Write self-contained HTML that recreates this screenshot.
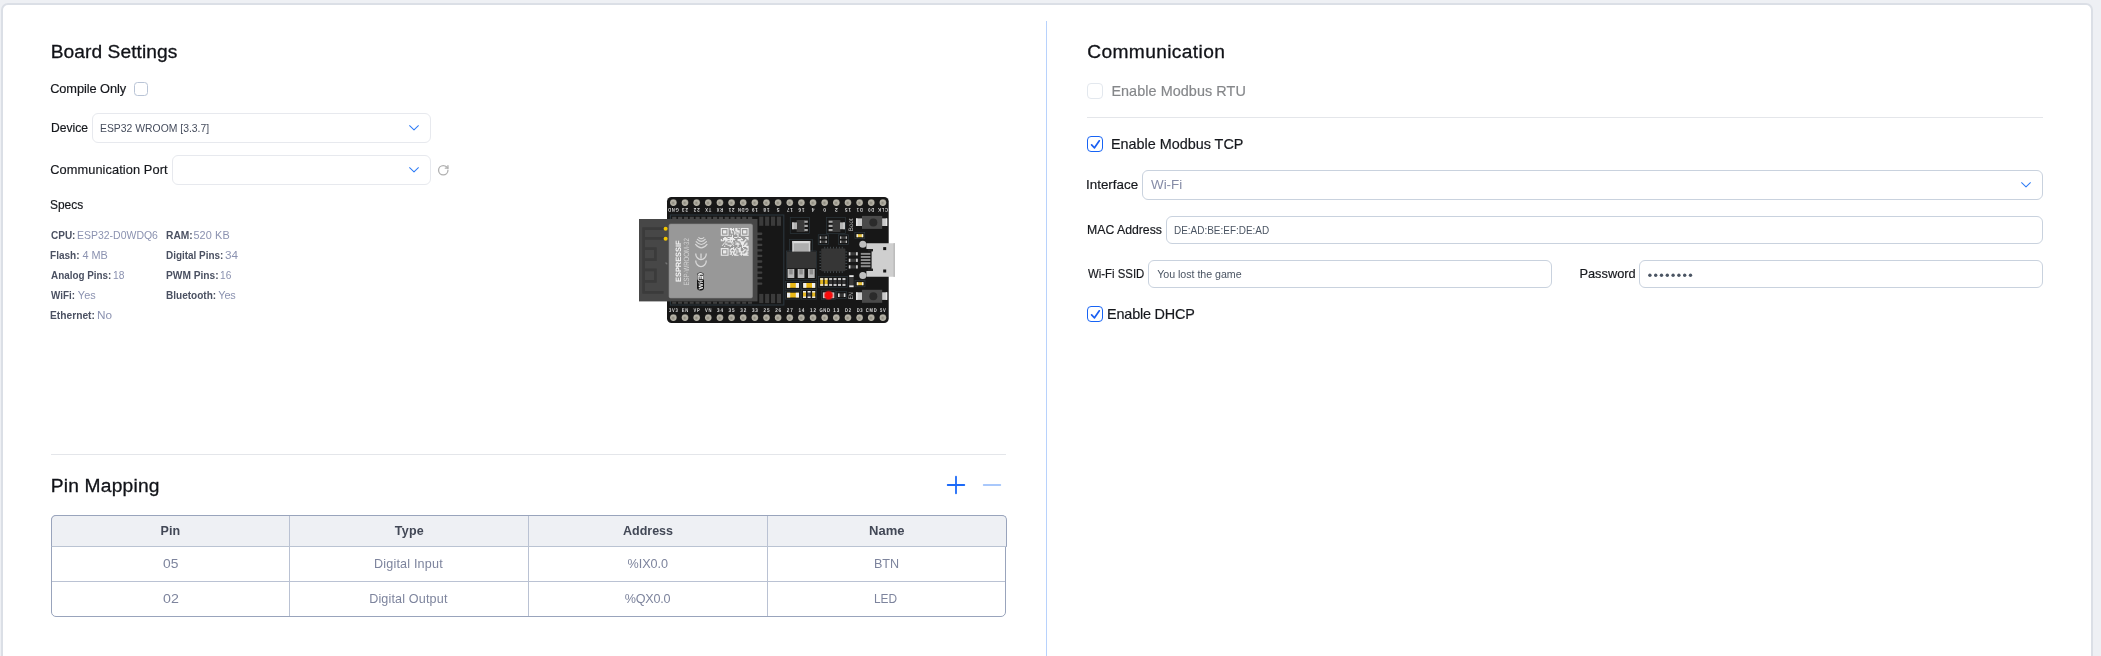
<!DOCTYPE html>
<html><head><meta charset="utf-8"><title>Board Settings</title>
<style>
html,body{margin:0;padding:0}
body{width:2101px;height:656px;overflow:hidden;background:#eef0f4;position:relative;font-family:"Liberation Sans",sans-serif}
.card{position:absolute;left:1px;top:3px;width:2088px;height:700px;border:2px solid #dbdfe6;border-radius:7px;background:#fff}
.t{transform-origin:0 0;position:absolute;line-height:1;white-space:nowrap;font-family:"Liberation Sans",sans-serif}
.a{position:absolute;box-sizing:border-box}
.hr{position:absolute;height:1px;background:#e4e6ea}
.sel{border:1px solid #e7e9ee;border-radius:6px;background:#fff}
.inp{border:1px solid #c9d2de;border-radius:6px;background:#fff}
.cb{border-radius:3.5px;background:#fff}
svg{position:absolute;overflow:visible}
</style></head><body>
<div class="card"></div>
<div class="a" style="left:1046px;top:21px;width:1px;height:640px;background:#b8d2fc"></div>

<!-- left panel -->
<div class="a cb" style="left:134px;top:82px;width:14px;height:14px;border:1px solid #b9c4d6"></div>
<div class="a sel" style="left:92px;top:113px;width:339px;height:30px"></div>
<div class="a sel" style="left:172px;top:155px;width:259px;height:30px"></div>
<svg style="left:407px;top:122px" width="14" height="12" viewBox="0 0 14 12"><path d="M2.6 3.7 L7 7.9 L11.4 3.7" fill="none" stroke="#2f7cf6" stroke-width="1.05" stroke-linecap="round" stroke-linejoin="round"/></svg>
<svg style="left:407px;top:164px" width="14" height="12" viewBox="0 0 14 12"><path d="M2.6 3.7 L7 7.9 L11.4 3.7" fill="none" stroke="#2f7cf6" stroke-width="1.05" stroke-linecap="round" stroke-linejoin="round"/></svg>
<svg style="left:436.56px;top:163.66px" width="12.5" height="12.5" viewBox="0 0 24 24"><path d="M21 12a9 9 0 1 1-9-9c2.52 0 4.93 1 6.74 2.74L21 8" fill="none" stroke="#b0b0b0" stroke-width="2.5" stroke-linecap="round" stroke-linejoin="round"/><path d="M21 3v5h-5" fill="none" stroke="#b0b0b0" stroke-width="2.5" stroke-linecap="round" stroke-linejoin="round"/></svg>

<div class="hr" style="left:51px;top:454px;width:955px"></div>
<svg style="left:945px;top:474px" width="60" height="22" viewBox="0 0 60 22"><path d="M2.7 11 H19.3 M11 2.7 V19.3" stroke="#1c6af8" stroke-width="1.8" stroke-linecap="round" fill="none"/><path d="M38.7 11 H55.3" stroke="#a9c8fb" stroke-width="1.8" stroke-linecap="round" fill="none"/></svg>

<!-- table -->
<div class="a" style="left:51px;top:515px;width:955px;height:102px;border:1px solid #99a4bc;border-radius:5px;background:#fff;overflow:hidden">
 <div class="a" style="left:0;top:65px;width:956px;height:1px;background:#bac2d3"></div>
 <div class="a" style="left:237px;top:0;width:1px;height:102px;background:#bac2d3"></div>
 <div class="a" style="left:476px;top:0;width:1px;height:102px;background:#bac2d3"></div>
 <div class="a" style="left:715px;top:0;width:1px;height:102px;background:#bac2d3"></div>
</div>
<div class="a" style="left:51px;top:515px;width:956px;height:32px;border:1px solid #99a4bc;border-bottom-color:#bac3d2;border-radius:5px 5px 0 0;background:#eef0f4;overflow:hidden">
 <div class="a" style="left:237px;top:0;width:1px;height:32px;background:#bac2d3"></div>
 <div class="a" style="left:476px;top:0;width:1px;height:32px;background:#bac2d3"></div>
 <div class="a" style="left:715px;top:0;width:1px;height:32px;background:#bac2d3"></div>
</div>

<!-- right panel -->
<div class="a cb" style="left:1087px;top:83px;width:16px;height:16px;border:1px solid #e3e8ee;border-radius:4px"></div>
<div class="hr" style="left:1087px;top:117px;width:956px"></div>
<div class="a cb" style="left:1087px;top:136px;width:16px;height:16px;border:1px solid #1764f5;border-radius:4px"></div>
<svg style="left:1087px;top:136px" width="16" height="16" viewBox="0 0 16 16"><path d="M4.6 8.9 L7.5 11.8 L12.3 4.8" fill="none" stroke="#1a5ff2" stroke-width="1.7" stroke-linecap="round" stroke-linejoin="round"/></svg>
<div class="a inp" style="left:1142px;top:170px;width:901px;height:30px;border-radius:6px"></div>
<svg style="left:2019px;top:179px" width="14" height="12" viewBox="0 0 14 12"><path d="M2.6 3.7 L7 7.9 L11.4 3.7" fill="none" stroke="#2f7cf6" stroke-width="1.05" stroke-linecap="round" stroke-linejoin="round"/></svg>
<div class="a inp" style="left:1166px;top:216px;width:877px;height:28px"></div>
<div class="a inp" style="left:1148px;top:260px;width:404px;height:28px"></div>
<div class="a inp" style="left:1639px;top:260px;width:404px;height:28px"></div>
<svg style="left:1646px;top:270px" width="50" height="10" viewBox="0 0 50 10"><g fill="#4b5563"><circle cx="3.9" cy="5.3" r="1.7"/><circle cx="9.7" cy="5.3" r="1.7"/><circle cx="15.5" cy="5.3" r="1.7"/><circle cx="21.3" cy="5.3" r="1.7"/><circle cx="27.1" cy="5.3" r="1.7"/><circle cx="32.9" cy="5.3" r="1.7"/><circle cx="38.7" cy="5.3" r="1.7"/><circle cx="44.5" cy="5.3" r="1.7"/></g></svg>
<div class="a cb" style="left:1087px;top:306px;width:16px;height:16px;border:1px solid #1764f5;border-radius:4px"></div>
<svg style="left:1087px;top:306px" width="16" height="16" viewBox="0 0 16 16"><path d="M4.6 8.9 L7.5 11.8 L12.3 4.8" fill="none" stroke="#1a5ff2" stroke-width="1.7" stroke-linecap="round" stroke-linejoin="round"/></svg>

<div id="tx" style="position:absolute;left:0;top:0;width:2101px;height:656px;will-change:transform">
<span class="t" style="left:50.72px;top:42px;font-size:19.2px;color:#111318;letter-spacing:0.060px;-webkit-text-stroke:0.3px">Board Settings</span>
<span class="t" style="left:50.18px;top:83px;font-size:12.8px;color:#16181d;letter-spacing:-0.078px;-webkit-text-stroke:0.18px">Compile Only</span>
<span class="t" style="left:50.70px;top:122px;font-size:12.8px;color:#16181d;transform:scaleX(0.9483);-webkit-text-stroke:0.18px">Device</span>
<span class="t" style="left:100.11px;top:122px;font-size:11.7px;color:#464d5d;transform:scaleX(0.8892)">ESP32 WROOM [3.3.7]</span>
<span class="t" style="left:50.18px;top:164px;font-size:12.8px;color:#16181d;letter-spacing:0.085px;-webkit-text-stroke:0.18px">Communication Port</span>
<span class="t" style="left:50.02px;top:199px;font-size:12.8px;color:#16181d;transform:scaleX(0.9343);-webkit-text-stroke:0.18px">Specs</span>
<span class="t" style="left:50.72px;top:476px;font-size:19.2px;color:#111318;letter-spacing:0.209px;-webkit-text-stroke:0.3px">Pin Mapping</span>
<span class="t" style="left:1087.20px;top:42px;font-size:19.2px;color:#111318;letter-spacing:0.367px;-webkit-text-stroke:0.3px">Communication</span>
<span class="t" style="left:1111.39px;top:84px;font-size:14.4px;color:#85878a;letter-spacing:0.069px;-webkit-text-stroke:0.18px">Enable Modbus RTU</span>
<span class="t" style="left:1110.89px;top:137px;font-size:14.4px;color:#16181d;letter-spacing:-0.002px;-webkit-text-stroke:0.18px">Enable Modbus TCP</span>
<span class="t" style="left:1086.43px;top:179px;font-size:12.8px;color:#16181d;transform:scaleX(1.0463);-webkit-text-stroke:0.18px">Interface</span>
<span class="t" style="left:1151.26px;top:179px;font-size:12.6px;color:#858ba6;transform:scaleX(1.0631)">Wi-Fi</span>
<span class="t" style="left:1086.89px;top:224px;font-size:12.8px;color:#16181d;transform:scaleX(0.9578);-webkit-text-stroke:0.18px">MAC Address</span>
<span class="t" style="left:1173.53px;top:225px;font-size:10.67px;color:#4b5563;transform:scaleX(0.9348)">DE:AD:BE:EF:DE:AD</span>
<span class="t" style="left:1087.70px;top:268px;font-size:12.8px;color:#16181d;transform:scaleX(0.8902);-webkit-text-stroke:0.18px">Wi-Fi SSID</span>
<span class="t" style="left:1157.16px;top:269px;font-size:10.67px;color:#4b5563;letter-spacing:-0.029px">You lost the game</span>
<span class="t" style="left:1579.44px;top:268px;font-size:12.8px;color:#16181d;letter-spacing:0.013px;-webkit-text-stroke:0.18px">Password</span>
<span class="t" style="left:1107.09px;top:307px;font-size:14.4px;color:#16181d;letter-spacing:-0.183px;-webkit-text-stroke:0.18px">Enable DHCP</span>
<span class="t" style="left:50.81px;top:230px;font-size:10.9px;color:#4b5162;transform:scaleX(0.9187);font-weight:700">CPU:</span>
<span class="t" style="left:77.04px;top:230px;font-size:10.9px;color:#8b92b0;transform:scaleX(0.9622)">ESP32-D0WDQ6</span>
<span class="t" style="left:165.66px;top:230px;font-size:10.9px;color:#4b5162;transform:scaleX(0.9385);font-weight:700">RAM:</span>
<span class="t" style="left:193.43px;top:230px;font-size:10.9px;color:#8b92b0;letter-spacing:0.115px">520 KB</span>
<span class="t" style="left:50.38px;top:250px;font-size:10.9px;color:#4b5162;transform:scaleX(0.9233);font-weight:700">Flash:</span>
<span class="t" style="left:82.41px;top:250px;font-size:10.9px;color:#8b92b0;letter-spacing:-0.023px">4 MB</span>
<span class="t" style="left:165.69px;top:250px;font-size:10.9px;color:#4b5162;transform:scaleX(0.9111);font-weight:700">Digital Pins:</span>
<span class="t" style="left:224.80px;top:250px;font-size:10.9px;color:#8b92b0;transform:scaleX(1.0756)">34</span>
<span class="t" style="left:50.89px;top:270px;font-size:10.9px;color:#4b5162;transform:scaleX(0.9061);font-weight:700">Analog Pins:</span>
<span class="t" style="left:112.82px;top:270px;font-size:10.9px;color:#8b92b0;transform:scaleX(0.9437)">18</span>
<span class="t" style="left:165.66px;top:270px;font-size:10.9px;color:#4b5162;transform:scaleX(0.9352);font-weight:700">PWM Pins:</span>
<span class="t" style="left:219.83px;top:270px;font-size:10.9px;color:#8b92b0;transform:scaleX(0.9344)">16</span>
<span class="t" style="left:51.16px;top:290px;font-size:10.9px;color:#4b5162;transform:scaleX(0.9052);font-weight:700">WiFi:</span>
<span class="t" style="left:77.85px;top:290px;font-size:10.9px;color:#8b92b0;letter-spacing:0.076px">Yes</span>
<span class="t" style="left:165.68px;top:290px;font-size:10.9px;color:#4b5162;transform:scaleX(0.9212);font-weight:700">Bluetooth:</span>
<span class="t" style="left:218.25px;top:290px;font-size:10.9px;color:#8b92b0;letter-spacing:-0.124px">Yes</span>
<span class="t" style="left:50.36px;top:310px;font-size:10.9px;color:#4b5162;transform:scaleX(0.9387);font-weight:700">Ethernet:</span>
<span class="t" style="left:96.92px;top:310px;font-size:10.9px;color:#8b92b0;transform:scaleX(1.0790)">No</span>
<span class="t" style="left:160.50px;top:525px;font-size:12.5px;color:#424856;letter-spacing:0.052px;font-weight:700">Pin</span>
<span class="t" style="left:394.74px;top:525px;font-size:12.5px;color:#424856;letter-spacing:0.259px;font-weight:700">Type</span>
<span class="t" style="left:623.00px;top:525px;font-size:12.5px;color:#424856;letter-spacing:-0.000px;font-weight:700">Address</span>
<span class="t" style="left:868.56px;top:525px;font-size:12.5px;color:#424856;transform:scaleX(1.0418);font-weight:700">Name</span>
<span class="t" style="left:162.53px;top:558px;font-size:12.6px;color:#7d849d;transform:scaleX(1.0962)">05</span>
<span class="t" style="left:374.06px;top:558px;font-size:12.6px;color:#7d849d;letter-spacing:0.176px">Digital Input</span>
<span class="t" style="left:627.59px;top:558px;font-size:12.6px;color:#7d849d;letter-spacing:-0.036px">%IX0.0</span>
<span class="t" style="left:873.96px;top:558px;font-size:12.6px;color:#7d849d;letter-spacing:-0.080px">BTN</span>
<span class="t" style="left:162.51px;top:593px;font-size:12.6px;color:#7d849d;transform:scaleX(1.1299)">02</span>
<span class="t" style="left:369.16px;top:593px;font-size:12.6px;color:#7d849d;letter-spacing:0.151px">Digital Output</span>
<span class="t" style="left:624.79px;top:593px;font-size:12.6px;color:#7d849d;letter-spacing:-0.213px">%QX0.0</span>
<span class="t" style="left:874.42px;top:593px;font-size:12.6px;color:#7d849d;transform:scaleX(0.9435)">LED</span>
</div>
<div style="position:absolute;left:0;top:0;width:2101px;height:656px;will-change:transform">
<svg style="left:630px;top:190px" width="280" height="140" viewBox="630 190 280 140" font-family="Liberation Sans, sans-serif" text-rendering="geometricPrecision">
<defs><radialGradient id="pg" cx="45%" cy="55%" r="55%"><stop offset="0" stop-color="#858278"/><stop offset="0.3" stop-color="#a09d91"/><stop offset="0.7" stop-color="#b8b5a9"/><stop offset="1" stop-color="#97948a"/></radialGradient></defs>
<rect x="667" y="197" width="221.7" height="126" rx="4.5" fill="#171717"/>
<rect x="670.4" y="215" width="113.4" height="90" fill="none" stroke="#2b363c" stroke-width="1.1"/>
<rect x="672.20" y="216.8" width="4.2" height="2.2" fill="#454545"/>
<rect x="672.20" y="301.6" width="4" height="2.2" fill="#3f3f3f"/>
<rect x="678.03" y="216.8" width="4.2" height="2.2" fill="#454545"/>
<rect x="678.03" y="301.6" width="4" height="2.2" fill="#3f3f3f"/>
<rect x="683.86" y="216.8" width="4.2" height="2.2" fill="#454545"/>
<rect x="683.86" y="301.6" width="4" height="2.2" fill="#3f3f3f"/>
<rect x="689.69" y="216.8" width="4.2" height="2.2" fill="#454545"/>
<rect x="689.69" y="301.6" width="4" height="2.2" fill="#3f3f3f"/>
<rect x="695.52" y="216.8" width="4.2" height="2.2" fill="#454545"/>
<rect x="695.52" y="301.6" width="4" height="2.2" fill="#3f3f3f"/>
<rect x="701.35" y="216.8" width="4.2" height="2.2" fill="#454545"/>
<rect x="701.35" y="301.6" width="4" height="2.2" fill="#3f3f3f"/>
<rect x="707.18" y="216.8" width="4.2" height="2.2" fill="#454545"/>
<rect x="707.18" y="301.6" width="4" height="2.2" fill="#3f3f3f"/>
<rect x="713.01" y="216.8" width="4.2" height="2.2" fill="#454545"/>
<rect x="713.01" y="301.6" width="4" height="2.2" fill="#3f3f3f"/>
<rect x="718.84" y="216.8" width="4.2" height="2.2" fill="#454545"/>
<rect x="718.84" y="301.6" width="4" height="2.2" fill="#3f3f3f"/>
<rect x="724.67" y="216.8" width="4.2" height="2.2" fill="#454545"/>
<rect x="724.67" y="301.6" width="4" height="2.2" fill="#3f3f3f"/>
<rect x="730.50" y="216.8" width="4.2" height="2.2" fill="#454545"/>
<rect x="730.50" y="301.6" width="4" height="2.2" fill="#3f3f3f"/>
<rect x="736.33" y="216.8" width="4.2" height="2.2" fill="#454545"/>
<rect x="736.33" y="301.6" width="4" height="2.2" fill="#3f3f3f"/>
<rect x="742.16" y="216.8" width="4.2" height="2.2" fill="#454545"/>
<rect x="742.16" y="301.6" width="4" height="2.2" fill="#3f3f3f"/>
<rect x="747.99" y="216.8" width="4.2" height="2.2" fill="#454545"/>
<rect x="747.99" y="301.6" width="4" height="2.2" fill="#3f3f3f"/>
<rect x="759.20" y="216.6" width="4.1" height="9.2" fill="#3b3b3b"/>
<rect x="759.20" y="293.9" width="4.1" height="9.2" fill="#3b3b3b"/>
<rect x="765.10" y="216.6" width="4.1" height="9.2" fill="#3b3b3b"/>
<rect x="765.10" y="293.9" width="4.1" height="9.2" fill="#3b3b3b"/>
<rect x="771.00" y="216.6" width="4.1" height="9.2" fill="#3b3b3b"/>
<rect x="771.00" y="293.9" width="4.1" height="9.2" fill="#3b3b3b"/>
<rect x="776.90" y="216.6" width="4.1" height="9.2" fill="#3b3b3b"/>
<rect x="776.90" y="293.9" width="4.1" height="9.2" fill="#3b3b3b"/>
<rect x="756" y="232.60" width="6.3" height="2.3" rx="0.8" fill="#404040"/>
<rect x="756" y="238.15" width="6.3" height="2.3" rx="0.8" fill="#404040"/>
<rect x="756" y="243.70" width="6.3" height="2.3" rx="0.8" fill="#404040"/>
<rect x="756" y="249.25" width="6.3" height="2.3" rx="0.8" fill="#404040"/>
<rect x="756" y="254.80" width="6.3" height="2.3" rx="0.8" fill="#404040"/>
<rect x="756" y="260.35" width="6.3" height="2.3" rx="0.8" fill="#404040"/>
<rect x="756" y="265.90" width="6.3" height="2.3" rx="0.8" fill="#404040"/>
<rect x="756" y="271.45" width="6.3" height="2.3" rx="0.8" fill="#404040"/>
<rect x="756" y="277.00" width="6.3" height="2.3" rx="0.8" fill="#404040"/>
<rect x="756" y="282.55" width="6.3" height="2.3" rx="0.8" fill="#404040"/>
<rect x="639" y="219" width="118.5" height="82.4" fill="#474747"/>
<path d="M664.4 228.6 H643.6 V292.4 H663.6 M643.6 238.4 H664.4 M644 248.6 H655.4 V259.6 H644 M644 269.9 H655.4 V281.4 H644" fill="none" stroke="#3b3b3b" stroke-width="2.7"/>
<rect x="669" y="224" width="83.5" height="74" rx="1.6" fill="#989898"/>
<rect x="669" y="224" width="83.5" height="74" rx="1.6" fill="none" stroke="#8a8a8a" stroke-width="0.6"/>
<circle cx="665.6" cy="228.7" r="2" fill="#f2c500"/><circle cx="665.6" cy="238.7" r="2" fill="#f2c500"/>
<path d="M666 262.2 v1.6 h1.4" stroke="#aaa" stroke-width="0.5" fill="none"/>
<text transform="translate(680.8 282) rotate(-90)" font-size="7.7" font-weight="700" fill="#f4f4f4" textLength="41.6" lengthAdjust="spacingAndGlyphs">ESPRESSIF</text>
<text transform="translate(688.8 285.6) rotate(-90)" font-size="7.6" fill="#d2d2d2" textLength="47.4" lengthAdjust="spacingAndGlyphs">ESP-WROOM-32</text>
<g fill="none" stroke="#d8d8d8" stroke-width="1.2" stroke-linecap="round"><path d="M698.8 237.6 Q701.3 239.8 703.8 237.6"/><path d="M697.4 239.4 Q701.3 243.4 705.2 239.4"/><path d="M696.2 241.6 Q701.3 247.4 706.4 241.6"/><path d="M695.6 244.4 Q701.3 251.4 707 244.4" /></g>
<g fill="none" stroke="#d8d8d8" stroke-width="1.3" stroke-linecap="butt"><path d="M695.7 253.4 A5.3 6.2 0 0 0 706.3 253.4"/><path d="M701 253.4 V258.8"/><path d="M695.7 260.4 A5.3 6.2 0 0 0 706.3 260.4"/></g>
<rect x="697" y="272.6" width="7" height="17.8" rx="3.2" fill="#141414"/>
<rect x="697.5" y="273" width="6" height="8.4" rx="2.8" fill="#f2f2f2"/>
<text transform="translate(702.8 289.6) rotate(-90)" font-size="6.2" font-weight="700" fill="#f4f4f4" textLength="8" lengthAdjust="spacingAndGlyphs">Wi</text>
<text transform="translate(702.8 280.8) rotate(-90)" font-size="6.2" font-weight="700" fill="#141414" textLength="6.6" lengthAdjust="spacingAndGlyphs">Fi</text>
<path d="M720.80 228.00h1.11v1.11h-1.11zM721.91 228.00h1.11v1.11h-1.11zM723.02 228.00h1.11v1.11h-1.11zM724.14 228.00h1.11v1.11h-1.11zM725.25 228.00h1.11v1.11h-1.11zM726.36 228.00h1.11v1.11h-1.11zM727.47 228.00h1.11v1.11h-1.11zM729.70 228.00h1.11v1.11h-1.11zM730.81 228.00h1.11v1.11h-1.11zM733.03 228.00h1.11v1.11h-1.11zM735.26 228.00h1.11v1.11h-1.11zM736.37 228.00h1.11v1.11h-1.11zM738.59 228.00h1.11v1.11h-1.11zM740.82 228.00h1.11v1.11h-1.11zM741.93 228.00h1.11v1.11h-1.11zM743.04 228.00h1.11v1.11h-1.11zM744.15 228.00h1.11v1.11h-1.11zM745.26 228.00h1.11v1.11h-1.11zM746.38 228.00h1.11v1.11h-1.11zM747.49 228.00h1.11v1.11h-1.11zM720.80 229.11h1.11v1.11h-1.11zM727.47 229.11h1.11v1.11h-1.11zM729.70 229.11h1.11v1.11h-1.11zM730.81 229.11h1.11v1.11h-1.11zM731.92 229.11h1.11v1.11h-1.11zM733.03 229.11h1.11v1.11h-1.11zM735.26 229.11h1.11v1.11h-1.11zM736.37 229.11h1.11v1.11h-1.11zM740.82 229.11h1.11v1.11h-1.11zM747.49 229.11h1.11v1.11h-1.11zM720.80 230.22h1.11v1.11h-1.11zM723.02 230.22h1.11v1.11h-1.11zM724.14 230.22h1.11v1.11h-1.11zM725.25 230.22h1.11v1.11h-1.11zM727.47 230.22h1.11v1.11h-1.11zM730.81 230.22h1.11v1.11h-1.11zM733.03 230.22h1.11v1.11h-1.11zM735.26 230.22h1.11v1.11h-1.11zM736.37 230.22h1.11v1.11h-1.11zM737.48 230.22h1.11v1.11h-1.11zM738.59 230.22h1.11v1.11h-1.11zM740.82 230.22h1.11v1.11h-1.11zM743.04 230.22h1.11v1.11h-1.11zM744.15 230.22h1.11v1.11h-1.11zM745.26 230.22h1.11v1.11h-1.11zM747.49 230.22h1.11v1.11h-1.11zM720.80 231.34h1.11v1.11h-1.11zM723.02 231.34h1.11v1.11h-1.11zM724.14 231.34h1.11v1.11h-1.11zM725.25 231.34h1.11v1.11h-1.11zM727.47 231.34h1.11v1.11h-1.11zM730.81 231.34h1.11v1.11h-1.11zM734.14 231.34h1.11v1.11h-1.11zM736.37 231.34h1.11v1.11h-1.11zM737.48 231.34h1.11v1.11h-1.11zM738.59 231.34h1.11v1.11h-1.11zM740.82 231.34h1.11v1.11h-1.11zM743.04 231.34h1.11v1.11h-1.11zM744.15 231.34h1.11v1.11h-1.11zM745.26 231.34h1.11v1.11h-1.11zM747.49 231.34h1.11v1.11h-1.11zM720.80 232.45h1.11v1.11h-1.11zM723.02 232.45h1.11v1.11h-1.11zM724.14 232.45h1.11v1.11h-1.11zM725.25 232.45h1.11v1.11h-1.11zM727.47 232.45h1.11v1.11h-1.11zM730.81 232.45h1.11v1.11h-1.11zM731.92 232.45h1.11v1.11h-1.11zM734.14 232.45h1.11v1.11h-1.11zM735.26 232.45h1.11v1.11h-1.11zM738.59 232.45h1.11v1.11h-1.11zM740.82 232.45h1.11v1.11h-1.11zM743.04 232.45h1.11v1.11h-1.11zM744.15 232.45h1.11v1.11h-1.11zM745.26 232.45h1.11v1.11h-1.11zM747.49 232.45h1.11v1.11h-1.11zM720.80 233.56h1.11v1.11h-1.11zM727.47 233.56h1.11v1.11h-1.11zM734.14 233.56h1.11v1.11h-1.11zM736.37 233.56h1.11v1.11h-1.11zM737.48 233.56h1.11v1.11h-1.11zM740.82 233.56h1.11v1.11h-1.11zM747.49 233.56h1.11v1.11h-1.11zM720.80 234.67h1.11v1.11h-1.11zM721.91 234.67h1.11v1.11h-1.11zM723.02 234.67h1.11v1.11h-1.11zM724.14 234.67h1.11v1.11h-1.11zM725.25 234.67h1.11v1.11h-1.11zM726.36 234.67h1.11v1.11h-1.11zM727.47 234.67h1.11v1.11h-1.11zM729.70 234.67h1.11v1.11h-1.11zM731.92 234.67h1.11v1.11h-1.11zM737.48 234.67h1.11v1.11h-1.11zM740.82 234.67h1.11v1.11h-1.11zM741.93 234.67h1.11v1.11h-1.11zM743.04 234.67h1.11v1.11h-1.11zM744.15 234.67h1.11v1.11h-1.11zM745.26 234.67h1.11v1.11h-1.11zM746.38 234.67h1.11v1.11h-1.11zM747.49 234.67h1.11v1.11h-1.11zM731.92 235.78h1.11v1.11h-1.11zM737.48 235.78h1.11v1.11h-1.11zM724.14 236.90h1.11v1.11h-1.11zM725.25 236.90h1.11v1.11h-1.11zM727.47 236.90h1.11v1.11h-1.11zM728.58 236.90h1.11v1.11h-1.11zM729.70 236.90h1.11v1.11h-1.11zM730.81 236.90h1.11v1.11h-1.11zM731.92 236.90h1.11v1.11h-1.11zM734.14 236.90h1.11v1.11h-1.11zM735.26 236.90h1.11v1.11h-1.11zM736.37 236.90h1.11v1.11h-1.11zM738.59 236.90h1.11v1.11h-1.11zM739.70 236.90h1.11v1.11h-1.11zM745.26 236.90h1.11v1.11h-1.11zM746.38 236.90h1.11v1.11h-1.11zM747.49 236.90h1.11v1.11h-1.11zM723.02 238.01h1.11v1.11h-1.11zM724.14 238.01h1.11v1.11h-1.11zM725.25 238.01h1.11v1.11h-1.11zM726.36 238.01h1.11v1.11h-1.11zM729.70 238.01h1.11v1.11h-1.11zM730.81 238.01h1.11v1.11h-1.11zM731.92 238.01h1.11v1.11h-1.11zM733.03 238.01h1.11v1.11h-1.11zM740.82 238.01h1.11v1.11h-1.11zM746.38 238.01h1.11v1.11h-1.11zM747.49 238.01h1.11v1.11h-1.11zM720.80 239.12h1.11v1.11h-1.11zM723.02 239.12h1.11v1.11h-1.11zM724.14 239.12h1.11v1.11h-1.11zM725.25 239.12h1.11v1.11h-1.11zM726.36 239.12h1.11v1.11h-1.11zM727.47 239.12h1.11v1.11h-1.11zM728.58 239.12h1.11v1.11h-1.11zM729.70 239.12h1.11v1.11h-1.11zM730.81 239.12h1.11v1.11h-1.11zM731.92 239.12h1.11v1.11h-1.11zM733.03 239.12h1.11v1.11h-1.11zM734.14 239.12h1.11v1.11h-1.11zM737.48 239.12h1.11v1.11h-1.11zM738.59 239.12h1.11v1.11h-1.11zM739.70 239.12h1.11v1.11h-1.11zM740.82 239.12h1.11v1.11h-1.11zM741.93 239.12h1.11v1.11h-1.11zM745.26 239.12h1.11v1.11h-1.11zM747.49 239.12h1.11v1.11h-1.11zM720.80 240.23h1.11v1.11h-1.11zM721.91 240.23h1.11v1.11h-1.11zM723.02 240.23h1.11v1.11h-1.11zM725.25 240.23h1.11v1.11h-1.11zM726.36 240.23h1.11v1.11h-1.11zM729.70 240.23h1.11v1.11h-1.11zM731.92 240.23h1.11v1.11h-1.11zM737.48 240.23h1.11v1.11h-1.11zM738.59 240.23h1.11v1.11h-1.11zM739.70 240.23h1.11v1.11h-1.11zM744.15 240.23h1.11v1.11h-1.11zM745.26 240.23h1.11v1.11h-1.11zM725.25 241.34h1.11v1.11h-1.11zM727.47 241.34h1.11v1.11h-1.11zM728.58 241.34h1.11v1.11h-1.11zM729.70 241.34h1.11v1.11h-1.11zM730.81 241.34h1.11v1.11h-1.11zM731.92 241.34h1.11v1.11h-1.11zM735.26 241.34h1.11v1.11h-1.11zM739.70 241.34h1.11v1.11h-1.11zM740.82 241.34h1.11v1.11h-1.11zM741.93 241.34h1.11v1.11h-1.11zM743.04 241.34h1.11v1.11h-1.11zM744.15 241.34h1.11v1.11h-1.11zM724.14 242.46h1.11v1.11h-1.11zM730.81 242.46h1.11v1.11h-1.11zM733.03 242.46h1.11v1.11h-1.11zM736.37 242.46h1.11v1.11h-1.11zM737.48 242.46h1.11v1.11h-1.11zM740.82 242.46h1.11v1.11h-1.11zM741.93 242.46h1.11v1.11h-1.11zM743.04 242.46h1.11v1.11h-1.11zM746.38 242.46h1.11v1.11h-1.11zM723.02 243.57h1.11v1.11h-1.11zM725.25 243.57h1.11v1.11h-1.11zM726.36 243.57h1.11v1.11h-1.11zM731.92 243.57h1.11v1.11h-1.11zM735.26 243.57h1.11v1.11h-1.11zM736.37 243.57h1.11v1.11h-1.11zM737.48 243.57h1.11v1.11h-1.11zM738.59 243.57h1.11v1.11h-1.11zM740.82 243.57h1.11v1.11h-1.11zM741.93 243.57h1.11v1.11h-1.11zM743.04 243.57h1.11v1.11h-1.11zM745.26 243.57h1.11v1.11h-1.11zM746.38 243.57h1.11v1.11h-1.11zM721.91 244.68h1.11v1.11h-1.11zM727.47 244.68h1.11v1.11h-1.11zM728.58 244.68h1.11v1.11h-1.11zM729.70 244.68h1.11v1.11h-1.11zM730.81 244.68h1.11v1.11h-1.11zM733.03 244.68h1.11v1.11h-1.11zM737.48 244.68h1.11v1.11h-1.11zM741.93 244.68h1.11v1.11h-1.11zM744.15 244.68h1.11v1.11h-1.11zM745.26 244.68h1.11v1.11h-1.11zM724.14 245.79h1.11v1.11h-1.11zM729.70 245.79h1.11v1.11h-1.11zM737.48 245.79h1.11v1.11h-1.11zM741.93 245.79h1.11v1.11h-1.11zM743.04 245.79h1.11v1.11h-1.11zM744.15 245.79h1.11v1.11h-1.11zM745.26 245.79h1.11v1.11h-1.11zM746.38 245.79h1.11v1.11h-1.11zM747.49 245.79h1.11v1.11h-1.11zM733.03 246.90h1.11v1.11h-1.11zM736.37 246.90h1.11v1.11h-1.11zM739.70 246.90h1.11v1.11h-1.11zM741.93 246.90h1.11v1.11h-1.11zM746.38 246.90h1.11v1.11h-1.11zM747.49 246.90h1.11v1.11h-1.11zM720.80 248.02h1.11v1.11h-1.11zM721.91 248.02h1.11v1.11h-1.11zM723.02 248.02h1.11v1.11h-1.11zM724.14 248.02h1.11v1.11h-1.11zM725.25 248.02h1.11v1.11h-1.11zM726.36 248.02h1.11v1.11h-1.11zM727.47 248.02h1.11v1.11h-1.11zM730.81 248.02h1.11v1.11h-1.11zM731.92 248.02h1.11v1.11h-1.11zM733.03 248.02h1.11v1.11h-1.11zM735.26 248.02h1.11v1.11h-1.11zM737.48 248.02h1.11v1.11h-1.11zM738.59 248.02h1.11v1.11h-1.11zM739.70 248.02h1.11v1.11h-1.11zM743.04 248.02h1.11v1.11h-1.11zM747.49 248.02h1.11v1.11h-1.11zM720.80 249.13h1.11v1.11h-1.11zM727.47 249.13h1.11v1.11h-1.11zM729.70 249.13h1.11v1.11h-1.11zM730.81 249.13h1.11v1.11h-1.11zM733.03 249.13h1.11v1.11h-1.11zM734.14 249.13h1.11v1.11h-1.11zM735.26 249.13h1.11v1.11h-1.11zM738.59 249.13h1.11v1.11h-1.11zM739.70 249.13h1.11v1.11h-1.11zM744.15 249.13h1.11v1.11h-1.11zM745.26 249.13h1.11v1.11h-1.11zM747.49 249.13h1.11v1.11h-1.11zM720.80 250.24h1.11v1.11h-1.11zM723.02 250.24h1.11v1.11h-1.11zM724.14 250.24h1.11v1.11h-1.11zM725.25 250.24h1.11v1.11h-1.11zM727.47 250.24h1.11v1.11h-1.11zM729.70 250.24h1.11v1.11h-1.11zM734.14 250.24h1.11v1.11h-1.11zM736.37 250.24h1.11v1.11h-1.11zM738.59 250.24h1.11v1.11h-1.11zM739.70 250.24h1.11v1.11h-1.11zM743.04 250.24h1.11v1.11h-1.11zM744.15 250.24h1.11v1.11h-1.11zM746.38 250.24h1.11v1.11h-1.11zM747.49 250.24h1.11v1.11h-1.11zM720.80 251.35h1.11v1.11h-1.11zM723.02 251.35h1.11v1.11h-1.11zM724.14 251.35h1.11v1.11h-1.11zM725.25 251.35h1.11v1.11h-1.11zM727.47 251.35h1.11v1.11h-1.11zM729.70 251.35h1.11v1.11h-1.11zM730.81 251.35h1.11v1.11h-1.11zM731.92 251.35h1.11v1.11h-1.11zM733.03 251.35h1.11v1.11h-1.11zM734.14 251.35h1.11v1.11h-1.11zM736.37 251.35h1.11v1.11h-1.11zM738.59 251.35h1.11v1.11h-1.11zM739.70 251.35h1.11v1.11h-1.11zM740.82 251.35h1.11v1.11h-1.11zM741.93 251.35h1.11v1.11h-1.11zM743.04 251.35h1.11v1.11h-1.11zM746.38 251.35h1.11v1.11h-1.11zM720.80 252.46h1.11v1.11h-1.11zM723.02 252.46h1.11v1.11h-1.11zM724.14 252.46h1.11v1.11h-1.11zM725.25 252.46h1.11v1.11h-1.11zM727.47 252.46h1.11v1.11h-1.11zM730.81 252.46h1.11v1.11h-1.11zM733.03 252.46h1.11v1.11h-1.11zM736.37 252.46h1.11v1.11h-1.11zM740.82 252.46h1.11v1.11h-1.11zM745.26 252.46h1.11v1.11h-1.11zM746.38 252.46h1.11v1.11h-1.11zM747.49 252.46h1.11v1.11h-1.11zM720.80 253.58h1.11v1.11h-1.11zM727.47 253.58h1.11v1.11h-1.11zM729.70 253.58h1.11v1.11h-1.11zM730.81 253.58h1.11v1.11h-1.11zM733.03 253.58h1.11v1.11h-1.11zM734.14 253.58h1.11v1.11h-1.11zM735.26 253.58h1.11v1.11h-1.11zM739.70 253.58h1.11v1.11h-1.11zM740.82 253.58h1.11v1.11h-1.11zM741.93 253.58h1.11v1.11h-1.11zM743.04 253.58h1.11v1.11h-1.11zM744.15 253.58h1.11v1.11h-1.11zM745.26 253.58h1.11v1.11h-1.11zM746.38 253.58h1.11v1.11h-1.11zM720.80 254.69h1.11v1.11h-1.11zM721.91 254.69h1.11v1.11h-1.11zM723.02 254.69h1.11v1.11h-1.11zM724.14 254.69h1.11v1.11h-1.11zM725.25 254.69h1.11v1.11h-1.11zM726.36 254.69h1.11v1.11h-1.11zM727.47 254.69h1.11v1.11h-1.11zM731.92 254.69h1.11v1.11h-1.11zM734.14 254.69h1.11v1.11h-1.11zM735.26 254.69h1.11v1.11h-1.11zM736.37 254.69h1.11v1.11h-1.11zM737.48 254.69h1.11v1.11h-1.11zM740.82 254.69h1.11v1.11h-1.11zM743.04 254.69h1.11v1.11h-1.11zM744.15 254.69h1.11v1.11h-1.11zM745.26 254.69h1.11v1.11h-1.11zM746.38 254.69h1.11v1.11h-1.11zM747.49 254.69h1.11v1.11h-1.11z" fill="#ebebeb"/>
<circle cx="673.40" cy="202.6" r="3.35" fill="url(#pg)"/>
<circle cx="673.40" cy="317.6" r="3.35" fill="url(#pg)"/>
<circle cx="685.04" cy="202.6" r="3.35" fill="url(#pg)"/>
<circle cx="685.04" cy="317.6" r="3.35" fill="url(#pg)"/>
<circle cx="696.68" cy="202.6" r="3.35" fill="url(#pg)"/>
<circle cx="696.68" cy="317.6" r="3.35" fill="url(#pg)"/>
<circle cx="708.32" cy="202.6" r="3.35" fill="url(#pg)"/>
<circle cx="708.32" cy="317.6" r="3.35" fill="url(#pg)"/>
<circle cx="719.96" cy="202.6" r="3.35" fill="url(#pg)"/>
<circle cx="719.96" cy="317.6" r="3.35" fill="url(#pg)"/>
<circle cx="731.60" cy="202.6" r="3.35" fill="url(#pg)"/>
<circle cx="731.60" cy="317.6" r="3.35" fill="url(#pg)"/>
<circle cx="743.24" cy="202.6" r="3.35" fill="url(#pg)"/>
<circle cx="743.24" cy="317.6" r="3.35" fill="url(#pg)"/>
<circle cx="754.88" cy="202.6" r="3.35" fill="url(#pg)"/>
<circle cx="754.88" cy="317.6" r="3.35" fill="url(#pg)"/>
<circle cx="766.52" cy="202.6" r="3.35" fill="url(#pg)"/>
<circle cx="766.52" cy="317.6" r="3.35" fill="url(#pg)"/>
<circle cx="778.16" cy="202.6" r="3.35" fill="url(#pg)"/>
<circle cx="778.16" cy="317.6" r="3.35" fill="url(#pg)"/>
<circle cx="789.80" cy="202.6" r="3.35" fill="url(#pg)"/>
<circle cx="789.80" cy="317.6" r="3.35" fill="url(#pg)"/>
<circle cx="801.44" cy="202.6" r="3.35" fill="url(#pg)"/>
<circle cx="801.44" cy="317.6" r="3.35" fill="url(#pg)"/>
<circle cx="813.08" cy="202.6" r="3.35" fill="url(#pg)"/>
<circle cx="813.08" cy="317.6" r="3.35" fill="url(#pg)"/>
<circle cx="824.72" cy="202.6" r="3.35" fill="url(#pg)"/>
<circle cx="824.72" cy="317.6" r="3.35" fill="url(#pg)"/>
<circle cx="836.36" cy="202.6" r="3.35" fill="url(#pg)"/>
<circle cx="836.36" cy="317.6" r="3.35" fill="url(#pg)"/>
<circle cx="848.00" cy="202.6" r="3.35" fill="url(#pg)"/>
<circle cx="848.00" cy="317.6" r="3.35" fill="url(#pg)"/>
<circle cx="859.64" cy="202.6" r="3.35" fill="url(#pg)"/>
<circle cx="859.64" cy="317.6" r="3.35" fill="url(#pg)"/>
<circle cx="871.28" cy="202.6" r="3.35" fill="url(#pg)"/>
<circle cx="871.28" cy="317.6" r="3.35" fill="url(#pg)"/>
<circle cx="882.92" cy="202.6" r="3.35" fill="url(#pg)"/>
<circle cx="882.92" cy="317.6" r="3.35" fill="url(#pg)"/>
<text transform="translate(678.73 208.05) rotate(180) scale(0.75 1)" font-size="5.5" font-weight="700" fill="#dedede" letter-spacing="1.0">GND</text>
<text transform="translate(668.98 311.90) scale(0.75 1)" font-size="5.5" font-weight="700" fill="#dedede" letter-spacing="1.0">3V3</text>
<text transform="translate(688.03 208.05) rotate(180) scale(0.84 1)" font-size="5.5" font-weight="700" fill="#dedede" letter-spacing="1.0">23</text>
<text transform="translate(681.80 311.90) scale(0.75 1)" font-size="5.5" font-weight="700" fill="#dedede" letter-spacing="1.0">EN</text>
<text transform="translate(699.67 208.05) rotate(180) scale(0.84 1)" font-size="5.5" font-weight="700" fill="#dedede" letter-spacing="1.0">22</text>
<text transform="translate(693.55 311.90) scale(0.75 1)" font-size="5.5" font-weight="700" fill="#dedede" letter-spacing="1.0">VP</text>
<text transform="translate(711.33 208.05) rotate(180) scale(0.75 1)" font-size="5.5" font-weight="700" fill="#dedede" letter-spacing="1.0">TX</text>
<text transform="translate(705.08 311.90) scale(0.75 1)" font-size="5.5" font-weight="700" fill="#dedede" letter-spacing="1.0">VN</text>
<text transform="translate(723.20 208.05) rotate(180) scale(0.75 1)" font-size="5.5" font-weight="700" fill="#dedede" letter-spacing="1.0">RX</text>
<text transform="translate(716.97 311.90) scale(0.84 1)" font-size="5.5" font-weight="700" fill="#dedede" letter-spacing="1.0">34</text>
<text transform="translate(734.59 208.05) rotate(180) scale(0.84 1)" font-size="5.5" font-weight="700" fill="#dedede" letter-spacing="1.0">21</text>
<text transform="translate(728.61 311.90) scale(0.84 1)" font-size="5.5" font-weight="700" fill="#dedede" letter-spacing="1.0">35</text>
<text transform="translate(748.57 208.05) rotate(180) scale(0.75 1)" font-size="5.5" font-weight="700" fill="#dedede" letter-spacing="1.0">GDN</text>
<text transform="translate(740.25 311.90) scale(0.84 1)" font-size="5.5" font-weight="700" fill="#dedede" letter-spacing="1.0">32</text>
<text transform="translate(757.87 208.05) rotate(180) scale(0.84 1)" font-size="5.5" font-weight="700" fill="#dedede" letter-spacing="1.0">19</text>
<text transform="translate(751.89 311.90) scale(0.84 1)" font-size="5.5" font-weight="700" fill="#dedede" letter-spacing="1.0">33</text>
<text transform="translate(769.51 208.05) rotate(180) scale(0.84 1)" font-size="5.5" font-weight="700" fill="#dedede" letter-spacing="1.0">18</text>
<text transform="translate(763.53 311.90) scale(0.84 1)" font-size="5.5" font-weight="700" fill="#dedede" letter-spacing="1.0">25</text>
<text transform="translate(779.54 208.05) rotate(180) scale(0.9 1)" font-size="5.5" font-weight="700" fill="#dedede" letter-spacing="1.0">5</text>
<text transform="translate(775.17 311.90) scale(0.84 1)" font-size="5.5" font-weight="700" fill="#dedede" letter-spacing="1.0">26</text>
<text transform="translate(792.79 208.05) rotate(180) scale(0.84 1)" font-size="5.5" font-weight="700" fill="#dedede" letter-spacing="1.0">17</text>
<text transform="translate(786.81 311.90) scale(0.84 1)" font-size="5.5" font-weight="700" fill="#dedede" letter-spacing="1.0">27</text>
<text transform="translate(804.43 208.05) rotate(180) scale(0.84 1)" font-size="5.5" font-weight="700" fill="#dedede" letter-spacing="1.0">16</text>
<text transform="translate(798.45 311.90) scale(0.84 1)" font-size="5.5" font-weight="700" fill="#dedede" letter-spacing="1.0">14</text>
<text transform="translate(814.46 208.05) rotate(180) scale(0.9 1)" font-size="5.5" font-weight="700" fill="#dedede" letter-spacing="1.0">4</text>
<text transform="translate(810.09 311.90) scale(0.84 1)" font-size="5.5" font-weight="700" fill="#dedede" letter-spacing="1.0">12</text>
<text transform="translate(826.10 208.05) rotate(180) scale(0.9 1)" font-size="5.5" font-weight="700" fill="#dedede" letter-spacing="1.0">0</text>
<text transform="translate(819.39 311.90) scale(0.75 1)" font-size="5.5" font-weight="700" fill="#dedede" letter-spacing="1.0">GND</text>
<text transform="translate(837.74 208.05) rotate(180) scale(0.9 1)" font-size="5.5" font-weight="700" fill="#dedede" letter-spacing="1.0">2</text>
<text transform="translate(833.37 311.90) scale(0.84 1)" font-size="5.5" font-weight="700" fill="#dedede" letter-spacing="1.0">13</text>
<text transform="translate(850.99 208.05) rotate(180) scale(0.84 1)" font-size="5.5" font-weight="700" fill="#dedede" letter-spacing="1.0">15</text>
<text transform="translate(844.99 311.90) scale(0.75 1)" font-size="5.5" font-weight="700" fill="#dedede" letter-spacing="1.0">D2</text>
<text transform="translate(862.65 208.05) rotate(180) scale(0.75 1)" font-size="5.5" font-weight="700" fill="#dedede" letter-spacing="1.0">D1</text>
<text transform="translate(856.63 311.90) scale(0.75 1)" font-size="5.5" font-weight="700" fill="#dedede" letter-spacing="1.0">D3</text>
<text transform="translate(874.29 208.05) rotate(180) scale(0.75 1)" font-size="5.5" font-weight="700" fill="#dedede" letter-spacing="1.0">D0</text>
<text transform="translate(865.83 311.90) scale(0.75 1)" font-size="5.5" font-weight="700" fill="#dedede" letter-spacing="1.0">CMD</text>
<text transform="translate(887.91 208.05) rotate(180) scale(0.75 1)" font-size="5.5" font-weight="700" fill="#dedede" letter-spacing="1.0">CLK</text>
<text transform="translate(880.02 311.90) scale(0.75 1)" font-size="5.5" font-weight="700" fill="#dedede" letter-spacing="1.0">5V</text>
<rect x="790.2" y="217.5" width="19.10" height="15.90" fill="none" stroke="#2f3b42" stroke-width="0.6"/>
<rect x="796.6" y="220" width="8.40" height="12.00" fill="#3a3a3a"/>
<rect x="792.2" y="222.4" width="4.80" height="6.80" fill="#b4b4b4"/>
<rect x="792.2" y="222.4" width="1.40" height="6.80" fill="#d4d4d4"/>
<rect x="804.4" y="220.6" width="3.40" height="2.20" fill="#a8a8a8"/>
<rect x="804.4" y="224.8" width="3.40" height="2.20" fill="#a8a8a8"/>
<rect x="804.4" y="229" width="3.40" height="2.20" fill="#a8a8a8"/>
<rect x="826.4" y="217.5" width="19.00" height="15.90" fill="none" stroke="#2f3b42" stroke-width="0.6"/>
<rect x="832.6" y="220" width="7.80" height="12.00" fill="#3a3a3a"/>
<rect x="840" y="222.4" width="4.80" height="6.80" fill="#b4b4b4"/>
<rect x="843.4" y="222.4" width="1.40" height="6.80" fill="#d4d4d4"/>
<rect x="828.6" y="220.6" width="4.00" height="2.20" fill="#a8a8a8"/>
<rect x="828.6" y="224.8" width="4.00" height="2.20" fill="#a8a8a8"/>
<rect x="828.6" y="229" width="4.00" height="2.20" fill="#a8a8a8"/>
<text transform="translate(853.2 231.2) rotate(-90)" font-size="6.4" fill="#c4c4c4" textLength="12.8" lengthAdjust="spacingAndGlyphs">Boot</text>
<rect x="856" y="218.4" width="6.40" height="7.60" fill="#c9c9c9"/>
<rect x="856" y="218.4" width="1.60" height="7.60" fill="#e4e4e4"/>
<rect x="881.8" y="218.4" width="5.40" height="7.60" fill="#c9c9c9"/>
<rect x="885.8" y="218.4" width="1.40" height="7.60" fill="#e4e4e4"/>
<rect x="862" y="215.9" width="20.20" height="13.00" fill="#4a4a4a"/>
<circle cx="873.3" cy="222.4" r="4" fill="#2b2b2b"/>
<rect x="856" y="292.3" width="6.40" height="7.60" fill="#c9c9c9"/>
<rect x="856" y="292.3" width="1.60" height="7.60" fill="#e4e4e4"/>
<rect x="881.8" y="292.3" width="5.40" height="7.60" fill="#c9c9c9"/>
<rect x="885.8" y="292.3" width="1.40" height="7.60" fill="#e4e4e4"/>
<rect x="862" y="289.8" width="20.20" height="13.00" fill="#4a4a4a"/>
<circle cx="873.3" cy="296.3" r="4" fill="#2b2b2b"/>
<rect x="854.8" y="232.6" width="10.00" height="6.00" fill="none" stroke="#2f3b42" stroke-width="0.6"/>
<rect x="856.6" y="234.2" width="6.60" height="3.00" fill="#e9c23a"/>
<rect x="856.6" y="234.2" width="1.40" height="3.00" fill="#eee"/>
<rect x="861.8" y="234.2" width="1.40" height="3.00" fill="#eee"/>
<rect x="818.2" y="234.8" width="10.20" height="9.80" fill="none" stroke="#2f3b42" stroke-width="0.6"/>
<rect x="819.8000000000001" y="236.4" width="7.00" height="2.40" fill="#3a3a3a"/>
<rect x="819.8000000000001" y="236.4" width="1.30" height="2.40" fill="#b8b8b8"/>
<rect x="825.5" y="236.4" width="1.30" height="2.40" fill="#b8b8b8"/>
<rect x="819.8000000000001" y="240.6" width="7.00" height="2.40" fill="#3a3a3a"/>
<rect x="819.8000000000001" y="240.6" width="1.30" height="2.40" fill="#b8b8b8"/>
<rect x="825.5" y="240.6" width="1.30" height="2.40" fill="#b8b8b8"/>
<rect x="838.4" y="234.8" width="10.20" height="9.80" fill="none" stroke="#2f3b42" stroke-width="0.6"/>
<rect x="840.0" y="236.4" width="7.00" height="2.40" fill="#3a3a3a"/>
<rect x="840.0" y="236.4" width="1.30" height="2.40" fill="#b8b8b8"/>
<rect x="845.6999999999999" y="236.4" width="1.30" height="2.40" fill="#b8b8b8"/>
<rect x="840.0" y="240.6" width="7.00" height="2.40" fill="#3a3a3a"/>
<rect x="840.0" y="240.6" width="1.30" height="2.40" fill="#b8b8b8"/>
<rect x="845.6999999999999" y="240.6" width="1.30" height="2.40" fill="#b8b8b8"/>
<rect x="786.4" y="251" width="30.20" height="28.60" fill="none" stroke="#2f3b42" stroke-width="0.6"/>
<rect x="789.6" y="239.6" width="23.00" height="11.40" fill="none" stroke="#2f3b42" stroke-width="0.6"/>
<rect x="792.4" y="241" width="17.80" height="11.40" fill="#aeaeae"/>
<rect x="792.4" y="241" width="17.80" height="2.20" fill="#d9d9d9"/>
<rect x="792.4" y="241" width="1.40" height="11.40" fill="#d0d0d0"/>
<rect x="808.8" y="241" width="1.40" height="11.40" fill="#d0d0d0"/>
<rect x="787" y="251.6" width="29.00" height="16.60" fill="#343434"/>
<rect x="787.6" y="269" width="6.70" height="9.00" fill="#b8b8b8"/>
<rect x="789.2" y="269" width="3.50" height="5.40" fill="#8c8c8c"/>
<rect x="797.7" y="269" width="6.70" height="9.00" fill="#b8b8b8"/>
<rect x="799.3000000000001" y="269" width="3.50" height="5.40" fill="#8c8c8c"/>
<rect x="808.0" y="269" width="6.70" height="9.00" fill="#b8b8b8"/>
<rect x="809.6" y="269" width="3.50" height="5.40" fill="#8c8c8c"/>
<rect x="824.4" y="246.8" width="0.80" height="2.00" fill="#4a5358"/>
<rect x="824.4" y="271" width="0.80" height="2.00" fill="#4a5358"/>
<rect x="819.4" y="251.6" width="2.00" height="0.80" fill="#4a5358"/>
<rect x="845.2" y="251.6" width="2.00" height="0.80" fill="#4a5358"/>
<rect x="827.3" y="246.8" width="0.80" height="2.00" fill="#4a5358"/>
<rect x="827.3" y="271" width="0.80" height="2.00" fill="#4a5358"/>
<rect x="819.4" y="254.5" width="2.00" height="0.80" fill="#4a5358"/>
<rect x="845.2" y="254.5" width="2.00" height="0.80" fill="#4a5358"/>
<rect x="830.1999999999999" y="246.8" width="0.80" height="2.00" fill="#4a5358"/>
<rect x="830.1999999999999" y="271" width="0.80" height="2.00" fill="#4a5358"/>
<rect x="819.4" y="257.4" width="2.00" height="0.80" fill="#4a5358"/>
<rect x="845.2" y="257.4" width="2.00" height="0.80" fill="#4a5358"/>
<rect x="833.1" y="246.8" width="0.80" height="2.00" fill="#4a5358"/>
<rect x="833.1" y="271" width="0.80" height="2.00" fill="#4a5358"/>
<rect x="819.4" y="260.3" width="2.00" height="0.80" fill="#4a5358"/>
<rect x="845.2" y="260.3" width="2.00" height="0.80" fill="#4a5358"/>
<rect x="836.0" y="246.8" width="0.80" height="2.00" fill="#4a5358"/>
<rect x="836.0" y="271" width="0.80" height="2.00" fill="#4a5358"/>
<rect x="819.4" y="263.2" width="2.00" height="0.80" fill="#4a5358"/>
<rect x="845.2" y="263.2" width="2.00" height="0.80" fill="#4a5358"/>
<rect x="838.9" y="246.8" width="0.80" height="2.00" fill="#4a5358"/>
<rect x="838.9" y="271" width="0.80" height="2.00" fill="#4a5358"/>
<rect x="819.4" y="266.1" width="2.00" height="0.80" fill="#4a5358"/>
<rect x="845.2" y="266.1" width="2.00" height="0.80" fill="#4a5358"/>
<rect x="841.8" y="246.8" width="0.80" height="2.00" fill="#4a5358"/>
<rect x="841.8" y="271" width="0.80" height="2.00" fill="#4a5358"/>
<rect x="819.4" y="269.0" width="2.00" height="0.80" fill="#4a5358"/>
<rect x="845.2" y="269.0" width="2.00" height="0.80" fill="#4a5358"/>
<rect x="821.2" y="248.6" width="24.20" height="22.60" fill="#363636" rx="0.8"/>
<rect x="848.8" y="252.20000000000002" width="8.90" height="3.20" fill="#3a3a3a"/>
<rect x="848.8" y="252.20000000000002" width="1.60" height="3.20" fill="#dedede"/>
<rect x="856.1" y="252.20000000000002" width="1.60" height="3.20" fill="#dedede"/>
<rect x="848.8" y="258.7" width="8.90" height="3.20" fill="#3a3a3a"/>
<rect x="848.8" y="258.7" width="1.60" height="3.20" fill="#dedede"/>
<rect x="856.1" y="258.7" width="1.60" height="3.20" fill="#dedede"/>
<rect x="848.8" y="265.29999999999995" width="8.90" height="3.20" fill="#3a3a3a"/>
<rect x="848.8" y="265.29999999999995" width="1.60" height="3.20" fill="#dedede"/>
<rect x="856.1" y="265.29999999999995" width="1.60" height="3.20" fill="#dedede"/>
<rect x="860.8" y="252.9" width="9.60" height="1.90" fill="#8f8f8f"/>
<rect x="860.8" y="256.0" width="9.60" height="1.90" fill="#8f8f8f"/>
<rect x="860.8" y="259.1" width="9.60" height="1.90" fill="#8f8f8f"/>
<rect x="860.8" y="262.2" width="9.60" height="1.90" fill="#8f8f8f"/>
<rect x="860.8" y="265.3" width="9.60" height="1.90" fill="#8f8f8f"/>
<rect x="866" y="243" width="6.00" height="6.60" fill="#1d1d1d"/>
<path d="M866.4 243.2 H895 V276.8 H866.4 V271 H871.6 V249 H866.4 Z" fill="#cfcfcf"/>
<rect x="868" y="249" width="5.00" height="2.40" fill="#222"/>
<rect x="868" y="268.6" width="5.00" height="2.40" fill="#222"/>
<rect x="883.2" y="247.1" width="3.00" height="3.00" fill="#151515"/>
<rect x="883.2" y="269.5" width="3.00" height="3.00" fill="#151515"/>
<rect x="893.4" y="243.2" width="1.6" height="33.6" fill="#bdbdbd"/>
<circle cx="862.8" cy="244.3" r="3.5" fill="#bfbfbf"/><circle cx="862.8" cy="275.5" r="3.5" fill="#bfbfbf"/>
<rect x="818.6" y="276.6" width="28.60" height="10.60" fill="none" stroke="#2f3b42" stroke-width="0.6"/>
<rect x="820.2" y="278.2" width="3.00" height="7.60" fill="#e2b51f"/>
<rect x="820.2" y="278.2" width="3.00" height="1.60" fill="#e6e6e6"/>
<rect x="820.2" y="284.2" width="3.00" height="1.60" fill="#e6e6e6"/>
<rect x="824.6500000000001" y="278.2" width="3.00" height="7.60" fill="#e2b51f"/>
<rect x="824.6500000000001" y="278.2" width="3.00" height="1.60" fill="#e6e6e6"/>
<rect x="824.6500000000001" y="284.2" width="3.00" height="1.60" fill="#e6e6e6"/>
<rect x="829.1" y="278.2" width="3.00" height="7.60" fill="#333"/>
<rect x="829.1" y="278.2" width="3.00" height="1.60" fill="#e6e6e6"/>
<rect x="829.1" y="284.2" width="3.00" height="1.60" fill="#e6e6e6"/>
<rect x="833.5500000000001" y="278.2" width="3.00" height="7.60" fill="#333"/>
<rect x="833.5500000000001" y="278.2" width="3.00" height="1.60" fill="#e6e6e6"/>
<rect x="833.5500000000001" y="284.2" width="3.00" height="1.60" fill="#e6e6e6"/>
<rect x="838.0" y="278.2" width="3.00" height="7.60" fill="#333"/>
<rect x="838.0" y="278.2" width="3.00" height="1.60" fill="#e6e6e6"/>
<rect x="838.0" y="284.2" width="3.00" height="1.60" fill="#e6e6e6"/>
<rect x="842.45" y="278.2" width="3.00" height="7.60" fill="#333"/>
<rect x="842.45" y="278.2" width="3.00" height="1.60" fill="#e6e6e6"/>
<rect x="842.45" y="284.2" width="3.00" height="1.60" fill="#e6e6e6"/>
<rect x="849.2" y="275.2" width="4.40" height="12.00" fill="#3a3a3a"/>
<rect x="849.2" y="275.2" width="4.40" height="1.80" fill="#e2e2e2"/>
<rect x="849.2" y="285.4" width="4.40" height="1.80" fill="#e2e2e2"/>
<rect x="855" y="280.6" width="10.00" height="6.20" fill="none" stroke="#2f3b42" stroke-width="0.6"/>
<rect x="856.8" y="282.2" width="6.60" height="3.00" fill="#e9c23a"/>
<rect x="856.8" y="282.2" width="1.40" height="3.00" fill="#eee"/>
<rect x="862" y="282.2" width="1.40" height="3.00" fill="#eee"/>
<rect x="785.6" y="281.4" width="14.80" height="8.00" fill="none" stroke="#2f3b42" stroke-width="0.6"/>
<rect x="787" y="283" width="12.00" height="4.80" fill="#e8b614"/>
<rect x="787" y="283" width="3.20" height="4.80" fill="#f0f0f0"/>
<rect x="795.8" y="283" width="3.20" height="4.80" fill="#f0f0f0"/>
<rect x="801.8000000000001" y="281.4" width="14.80" height="8.00" fill="none" stroke="#2f3b42" stroke-width="0.6"/>
<rect x="803.2" y="283" width="12.00" height="4.80" fill="#e8b614"/>
<rect x="803.2" y="283" width="3.20" height="4.80" fill="#f0f0f0"/>
<rect x="812.0" y="283" width="3.20" height="4.80" fill="#f0f0f0"/>
<rect x="785.6" y="291.09999999999997" width="14.80" height="8.00" fill="none" stroke="#2f3b42" stroke-width="0.6"/>
<rect x="787" y="292.7" width="12.00" height="4.80" fill="#e8b614"/>
<rect x="787" y="292.7" width="3.20" height="4.80" fill="#f0f0f0"/>
<rect x="795.8" y="292.7" width="3.20" height="4.80" fill="#f0f0f0"/>
<rect x="801.6" y="289.6" width="15.00" height="9.60" fill="none" stroke="#2f3b42" stroke-width="0.6"/>
<rect x="803.0" y="291" width="3.00" height="7.00" fill="#e2b51f"/>
<rect x="803.0" y="291" width="3.00" height="1.50" fill="#e6e6e6"/>
<rect x="803.0" y="296.5" width="3.00" height="1.50" fill="#e6e6e6"/>
<rect x="807.6" y="291" width="3.00" height="7.00" fill="#444"/>
<rect x="807.6" y="291" width="3.00" height="1.50" fill="#e6e6e6"/>
<rect x="807.6" y="296.5" width="3.00" height="1.50" fill="#e6e6e6"/>
<rect x="812.2" y="291" width="3.00" height="7.00" fill="#e2b51f"/>
<rect x="812.2" y="291" width="3.00" height="1.50" fill="#e6e6e6"/>
<rect x="812.2" y="296.5" width="3.00" height="1.50" fill="#e6e6e6"/>
<rect x="821.6" y="290.8" width="14.00" height="8.80" fill="none" stroke="#2f3b42" stroke-width="0.6"/>
<rect x="822.9" y="292.4" width="11.40" height="5.80" fill="#d2c4c4"/>
<defs><radialGradient id="rg"><stop offset="0" stop-color="#ff0808"/><stop offset="0.62" stop-color="#f40e0e"/><stop offset="1" stop-color="#e81515" stop-opacity="0"/></radialGradient></defs>
<circle cx="828.6" cy="295.3" r="5.3" fill="url(#rg)"/>
<rect x="836.6" y="291.6" width="10.00" height="7.00" fill="none" stroke="#2f3b42" stroke-width="0.6"/>
<rect x="838" y="293.4" width="7.40" height="3.60" fill="#333"/>
<rect x="838" y="293.4" width="1.60" height="3.60" fill="#ddd"/>
<rect x="843.8" y="293.4" width="1.60" height="3.60" fill="#ddd"/>
<text transform="translate(853.4 299.4) rotate(-90)" font-size="6.4" fill="#c4c4c4" textLength="7.2" lengthAdjust="spacingAndGlyphs">EN</text>
</svg>
</div>
</body></html>
